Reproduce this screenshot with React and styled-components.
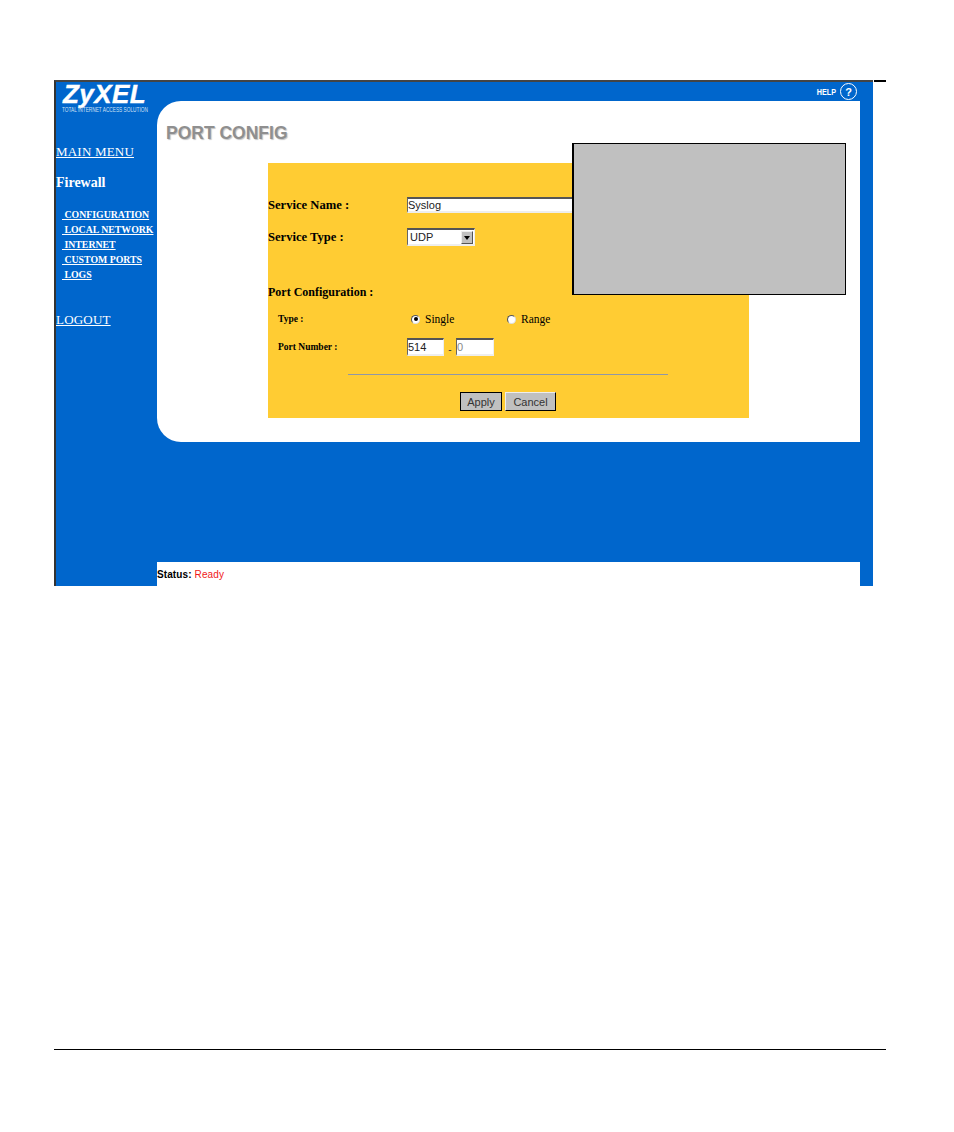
import styled, { createGlobalStyle } from "styled-components";

const GlobalStyle = createGlobalStyle`
  html, body {
    margin: 0;
    padding: 0;
    background: #fff;
  }
`;

const menuItems = ["CONFIGURATION", "LOCAL NETWORK", "INTERNET", "CUSTOM PORTS", "LOGS"];

const App = () => {
  return (
    <Page>
      <GlobalStyle />
      <Frame>
        <Tick />
        <Sidebar>
          <Logo>ZyXEL</Logo>
          <Tagline>TOTAL INTERNET ACCESS SOLUTION</Tagline>
          <BigLink $top={30}>MAIN MENU</BigLink>
          <SectionName>Firewall</SectionName>
          <SubMenu>
            {menuItems.map((item) => (
              <SubLink key={item}>{"\u00a0" + item}</SubLink>
            ))}
          </SubMenu>
          <BigLink $top={30}>LOGOUT</BigLink>
        </Sidebar>
        <Main>
          <TopBar>
            <HelpLabel>HELP</HelpLabel>
            <HelpIcon>?</HelpIcon>
          </TopBar>
          <ContentPanel>
            <Title>PORT CONFIG</Title>
            <FormPanel>
              <FieldRow>
                <Label>Service Name :</Label>
                <TextInput $width={240} readOnly defaultValue="Syslog" />
              </FieldRow>
              <FieldRow $top={15}>
                <Label>Service Type :</Label>
                <SelectBox>
                  <span>UDP</span>
                  <SelectArrow />
                </SelectBox>
              </FieldRow>
              <SectionLabel>Port Configuration :</SectionLabel>
              <SubRow $top={11}>
                <SmallLabel>Type :</SmallLabel>
                <RadioGroup>
                  <RadioOption $width={96}>
                    <Radio $checked />
                    Single
                  </RadioOption>
                  <RadioOption>
                    <Radio />
                    Range
                  </RadioOption>
                </RadioGroup>
              </SubRow>
              <SubRow $top={11}>
                <SmallLabel>Port Number :</SmallLabel>
                <PortInput $width={37} readOnly defaultValue="514" />
                <Dash>-</Dash>
                <PortInput $width={38} $muted readOnly defaultValue="0" />
              </SubRow>
              <Divider />
              <ButtonRow>
                <Button $width={42} $focused>Apply</Button>
                <Button $width={51}>Cancel</Button>
              </ButtonRow>
            </FormPanel>
            <Callout />
          </ContentPanel>
          <StatusBar>
            <StatusKey>Status:</StatusKey>
            <StatusValue>Ready</StatusValue>
          </StatusBar>
        </Main>
      </Frame>
      <FooterRule />
    </Page>
  );
};

export default App;

const Page = styled.div`
  width: 954px;
  height: 1132px;
  padding: 80px 0 0 54px;
  box-sizing: border-box;
`;

const Frame = styled.div`
  position: relative;
  display: flex;
  width: 819px;
  height: 506px;
  box-sizing: border-box;
  background: #0066cc;
  border-top: 2px solid #444;
  border-left: 2px solid #333;
`;

const Tick = styled.div`
  position: absolute;
  top: -2px;
  left: 100%;
  width: 12px;
  height: 2px;
  margin-left: 1px;
  background: #000;
`;

const Sidebar = styled.div`
  width: 101px;
  flex: none;
  color: #fff;
  font-family: "Liberation Serif", serif;
`;

const Logo = styled.div`
  height: 21px;
  padding: 2px 0 0 7px;
  font: italic bold 26px/21px "Liberation Sans", sans-serif;
  letter-spacing: 0.4px;
  -webkit-text-stroke: 0.4px #fff;
`;

const Tagline = styled.div`
  height: 9px;
  padding-left: 6px;
  font: 4.75px/9px "Liberation Sans", sans-serif;
  white-space: nowrap;
  color: #cfe0f4;
  transform: scaleY(1.35);
`;

const BigLink = styled.div`
  margin-top: ${(p) => p.$top}px;
  font-size: 13px;
  line-height: 16px;
  letter-spacing: 0.2px;
  text-decoration: underline;
`;

const SectionName = styled.div`
  margin-top: 15px;
  font-size: 14px;
  font-weight: bold;
  line-height: 16px;
`;

const SubMenu = styled.div`
  display: flex;
  flex-direction: column;
  align-items: flex-start;
  margin-top: 16px;
  padding-left: 6px;
`;

const SubLink = styled.div`
  height: 15px;
  font-size: 9.8px;
  font-weight: bold;
  line-height: 15px;
  white-space: nowrap;
  text-decoration: underline;
`;

const Main = styled.div`
  display: flex;
  flex-direction: column;
  width: 703px;
  flex: none;
`;

const TopBar = styled.div`
  display: flex;
  justify-content: flex-end;
  align-items: center;
  gap: 4px;
  height: 19px;
  padding-right: 3px;
  color: #fff;
`;

const HelpLabel = styled.span`
  font: bold 9px "Liberation Sans", sans-serif;
  transform: scaleX(0.8);
  transform-origin: right center;
`;

const HelpIcon = styled.span`
  display: flex;
  justify-content: center;
  align-items: center;
  width: 17px;
  height: 17px;
  box-sizing: border-box;
  border: 1.5px solid #fff;
  border-radius: 50%;
  font: bold 11px "Liberation Sans", sans-serif;
`;

const ContentPanel = styled.div`
  position: relative;
  height: 341px;
  box-sizing: border-box;
  padding: 22px 0 0 111px;
  background: #fff;
  border-radius: 24px 0 0 24px;
`;

const Title = styled.div`
  height: 20px;
  margin-left: -102px;
  color: #8f8f8f;
  font: bold 17.5px/20px "Liberation Sans", sans-serif;
  text-shadow: 1px 1px 1px #c4c4c4;
`;

const FormPanel = styled.div`
  display: flex;
  flex-direction: column;
  width: 481px;
  height: 255px;
  box-sizing: border-box;
  margin-top: 20px;
  padding-top: 34px;
  overflow: hidden;
  background: #ffcc33;
`;

const FieldRow = styled.div`
  display: flex;
  align-items: center;
  margin-top: ${(p) => p.$top || 0}px;
`;

const Label = styled.div`
  width: 139px;
  flex: none;
  font: bold 12.6px "Liberation Serif", serif;
  color: #000;
`;

const sunken = `
  box-sizing: border-box;
  background: #fff;
  border-style: solid;
  border-width: 2px 1px 2px 1px;
  border-color: #555 #eee #eee #666;
  outline: none;
  font: 11px "Liberation Sans", sans-serif;
  color: #222;
`;

const TextInput = styled.input`
  ${sunken}
  width: ${(p) => p.$width}px;
  height: 16px;
  padding: 0;
`;

const SelectBox = styled.div`
  ${sunken}
  display: flex;
  justify-content: space-between;
  align-items: center;
  width: 68px;
  height: 18px;
  padding: 0 1px 0 2px;
`;

const SelectArrow = styled.span`
  position: relative;
  width: 12px;
  height: 13px;
  background: #c0c0c0;
  border: 1px solid;
  border-color: #eee #555 #555 #eee;
  box-sizing: border-box;

  &::after {
    content: "";
    position: absolute;
    top: 4px;
    left: 2px;
    border: 3px solid transparent;
    border-top: 4px solid #000;
    border-bottom: 0;
  }
`;

const SectionLabel = styled.div`
  height: 16px;
  margin-top: 38px;
  font: bold 12px/16px "Liberation Serif", serif;
  color: #000;
`;

const SubRow = styled.div`
  display: flex;
  align-items: center;
  min-height: 16px;
  margin-top: ${(p) => p.$top}px;
  padding-left: 10px;
`;

const SmallLabel = styled.div`
  width: 129px;
  flex: none;
  font: bold 9.5px "Liberation Serif", serif;
  color: #000;
`;

const RadioGroup = styled.div`
  display: flex;
  padding-left: 4px;
`;

const RadioOption = styled.div`
  display: flex;
  align-items: center;
  gap: 5px;
  width: ${(p) => (p.$width ? `${p.$width}px` : "auto")};
  font: 11.5px "Liberation Serif", serif;
  color: #000;
`;

const Radio = styled.span`
  position: relative;
  width: 9px;
  height: 9px;
  box-sizing: border-box;
  background: #fff;
  border: 1px solid;
  border-color: #555 #ddd #ddd #555;
  border-radius: 50%;

  &::after {
    content: "";
    display: ${(p) => (p.$checked ? "block" : "none")};
    position: absolute;
    top: 1.5px;
    left: 1.5px;
    width: 4px;
    height: 4px;
    border-radius: 50%;
    background: #000;
  }
`;

const PortInput = styled.input`
  ${sunken}
  width: ${(p) => p.$width}px;
  height: 18px;
  padding: 0;
  color: ${(p) => (p.$muted ? "#888" : "#222")};
`;

const Dash = styled.span`
  width: 12px;
  padding-top: 5px;
  text-align: center;
  font: 10px "Liberation Sans", sans-serif;
  color: #333;
`;

const Divider = styled.div`
  width: 320px;
  height: 1px;
  margin: 18px 0 0 80px;
  background: #8f97a8;
`;

const ButtonRow = styled.div`
  display: flex;
  gap: 3px;
  margin: 17px 0 0 192px;
`;

const Button = styled.button`
  width: ${(p) => p.$width}px;
  height: 19px;
  padding: 0;
  box-sizing: border-box;
  background: #c0c0c0;
  border: 1px solid;
  border-color: ${(p) => (p.$focused ? "#000" : "#eee #000 #000 #eee")};
  font: 11px "Liberation Sans", sans-serif;
  color: #333;
`;

const Callout = styled.div`
  position: absolute;
  top: 42px;
  left: 415px;
  width: 274px;
  height: 152px;
  box-sizing: border-box;
  background: #c0c0c0;
  border: 1px solid #000;
  border-left-width: 2px;
`;

const StatusBar = styled.div`
  display: flex;
  gap: 3px;
  height: 24px;
  margin-top: 120px;
  background: #fff;
  font: 10px/26px "Liberation Sans", sans-serif;
  letter-spacing: 0.1px;
  color: #000;
`;

const StatusKey = styled.span`
  font-weight: bold;
`;

const StatusValue = styled.span`
  color: #f01818;
`;

const FooterRule = styled.div`
  width: 832px;
  height: 1px;
  margin-top: 463px;
  background: #000;
`;
